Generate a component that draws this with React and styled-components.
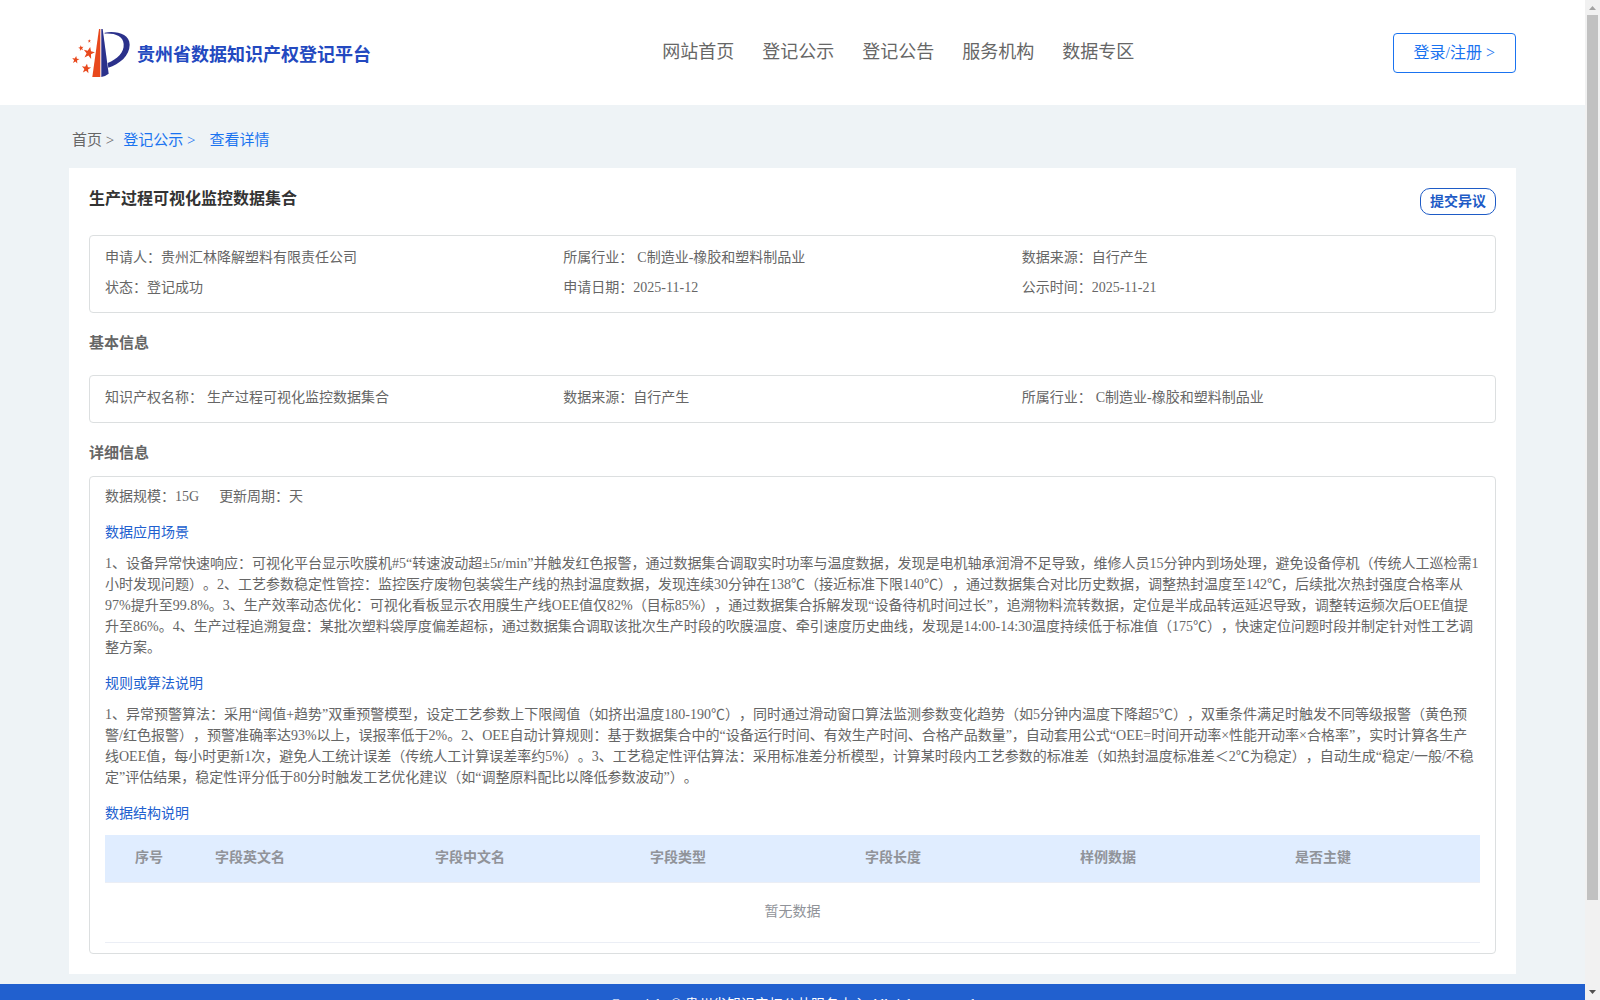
import React from 'react';
import styled, { createGlobalStyle } from 'styled-components';

const GlobalStyle = createGlobalStyle`
  * {
    box-sizing: border-box;
  }
  body {
    margin: 0;
    color: #666;
    font-family: 'Liberation Serif', 'Noto Sans CJK SC', serif;
    font-size: 14px;
    line-height: 21px;
    text-spacing-trim: space-all;
  }
  h1, h2, h3, p, dl, dd, ul {
    margin: 0;
    padding: 0;
  }
  a {
    color: inherit;
    text-decoration: none;
  }
`;

const Window = styled.div`
  display: flex;
  height: 100vh;
`;

const Page = styled.div`
  flex: 1;
  overflow-y: auto;
  scrollbar-width: none;
  background-color: #eef3f6;
`;

const ScrollTrack = styled.div`
  display: flex;
  flex-direction: column;
  align-items: center;
  width: 15px;
  background-color: #f1f1f1;
`;

const ScrollArrow = styled.svg`
  display: block;
  width: 15px;
  height: 15px;
`;

const ScrollSpace = styled.div`
  flex: 1;
  width: 11px;
`;

const ScrollThumb = styled.div`
  height: calc(100% - 85px);
  background-color: #c1c1c1;
`;

const Header = styled.header`
  display: flex;
  align-items: center;
  height: 105px;
  padding: 0 69px;
  background-color: #fff;
`;

const Brand = styled.a`
  display: flex;
  align-items: center;
  flex: 0 0 41%;
  gap: 6px;
  padding-left: 3px;
  color: #2349c0;
  font-size: 18px;
  font-weight: bold;
  white-space: nowrap;
`;

const BrandName = styled.span`
  padding-top: 5px;
`;

const LogoImage = styled.svg`
  width: 59px;
  height: 50px;
`;

const Nav = styled.nav`
  display: flex;
  flex: 1;
  gap: 28px;
  font-size: 18px;
  white-space: nowrap;
`;

const LoginButton = styled.button`
  height: 40px;
  padding: 0 20px 3px;
  border: 1px solid #1a73f0;
  border-radius: 4px;
  background-color: #fff;
  color: #1a73f0;
  font-family: inherit;
  font-size: 16px;
  white-space: nowrap;
`;

const Breadcrumb = styled.nav`
  display: flex;
  gap: 9px;
  padding: 25px 72px 17px;
  font-size: 15px;
`;

const Crumb = styled.a`
  color: ${({ $active }) => ($active ? '#1a73f0' : '#666')};
  margin-right: ${({ $active }) => ($active ? '5px' : 0)};
`;

const Card = styled.main`
  margin: 0 69px 10px;
  padding: 20px;
  background-color: #fff;
`;

const CardHeader = styled.div`
  display: flex;
  justify-content: space-between;
  align-items: flex-start;
  margin-bottom: 20px;
`;

const Title = styled.h1`
  color: #333;
  font-size: 16px;
  font-weight: bold;
`;

const ObjectionButton = styled.button`
  height: 27px;
  padding: 0 9px 4px;
  border: 1px solid #1e5bc6;
  border-radius: 10px;
  background-color: #fff;
  color: #1e5bc6;
  font-family: inherit;
  font-size: 14px;
  font-weight: bold;
`;

const SectionTitle = styled.h2`
  margin: ${({ $compact }) => ($compact ? '20px 0 12px' : '20px 0 21px')};
  font-size: 15px;
  font-weight: bold;
`;

const Box = styled.section`
  padding: 9px 15px 10px;
  border: 1px solid #dcdfe0;
  border-radius: 4px;
`;

const InfoList = styled.dl`
  display: grid;
  grid-template-columns: repeat(3, 1fr);
  padding: 7px 15px 9px;
  border: 1px solid #dcdfe0;
  border-radius: 4px;
`;

const InfoItem = styled.div`
  display: flex;
  gap: ${({ $spaced }) => ($spaced ? '4px' : 0)};
  line-height: 30px;
`;

const Meta = styled.p`
  display: flex;
  gap: 20px;
`;

const SubTitle = styled.h3`
  margin: 15px 0 10px;
  color: #2160cf;
  font-size: 14px;
  font-weight: normal;
`;

const Table = styled.table`
  width: 100%;
  margin-top: 11px;
  table-layout: fixed;
  border-collapse: separate;
  border-spacing: 0;
  color: #909399;
`;

const HeadCell = styled.th`
  width: ${({ $width }) => $width || 'auto'};
  height: 48px;
  padding: 0 0 2px 30px;
  border-bottom: 1px solid #ebeef5;
  background-color: #e0edff;
  text-align: left;
`;

const EmptyCell = styled.td`
  height: 60px;
  padding: 0 0 2px;
  border-bottom: 1px solid #ebeef5;
  text-align: center;
`;

const Footer = styled.footer`
  padding: 10px 0 20px;
  background-color: #2160cf;
  color: #fff;
  text-align: center;
`;

const MENUS = ['网站首页', '登记公示', '登记公告', '服务机构', '数据专区'];

const SUMMARY = [
  { label: '申请人：', value: '贵州汇林降解塑料有限责任公司' },
  { label: '所属行业：', value: 'C制造业-橡胶和塑料制品业', spaced: true },
  { label: '数据来源：', value: '自行产生' },
  { label: '状态：', value: '登记成功' },
  { label: '申请日期：', value: '2025-11-12' },
  { label: '公示时间：', value: '2025-11-21' },
];

const BASIC = [
  { label: '知识产权名称：', value: '生产过程可视化监控数据集合', spaced: true },
  { label: '数据来源：', value: '自行产生' },
  { label: '所属行业：', value: 'C制造业-橡胶和塑料制品业', spaced: true },
];

const COLUMNS = [
  { name: '序号', width: '80px' },
  { name: '字段英文名', width: '220px' },
  { name: '字段中文名' },
  { name: '字段类型' },
  { name: '字段长度' },
  { name: '样例数据' },
  { name: '是否主键' },
];

const SCENE =
  '1、设备异常快速响应：可视化平台显示吹膜机#5“转速波动超±5r/min”并触发红色报警，通过数据集合调取实时功率与温度数据，发现是电机轴承润滑不足导致，维修人员15分钟内到场处理，避免设备停机（传统人工巡检需1小时发现问题）。2、工艺参数稳定性管控：监控医疗废物包装袋生产线的热封温度数据，发现连续30分钟在138℃（接近标准下限140℃），通过数据集合对比历史数据，调整热封温度至142℃，后续批次热封强度合格率从97%提升至99.8%。3、生产效率动态优化：可视化看板显示农用膜生产线OEE值仅82%（目标85%），通过数据集合拆解发现“设备待机时间过长”，追溯物料流转数据，定位是半成品转运延迟导致，调整转运频次后OEE值提升至86%。4、生产过程追溯复盘：某批次塑料袋厚度偏差超标，通过数据集合调取该批次生产时段的吹膜温度、牵引速度历史曲线，发现是14:00-14:30温度持续低于标准值（175℃），快速定位问题时段并制定针对性工艺调整方案。';

const RULES =
  '1、异常预警算法：采用“阈值+趋势”双重预警模型，设定工艺参数上下限阈值（如挤出温度180-190℃），同时通过滑动窗口算法监测参数变化趋势（如5分钟内温度下降超5℃），双重条件满足时触发不同等级报警（黄色预警/红色报警），预警准确率达93%以上，误报率低于2%。2、OEE自动计算规则：基于数据集合中的“设备运行时间、有效生产时间、合格产品数量”，自动套用公式“OEE=时间开动率×性能开动率×合格率”，实时计算各生产线OEE值，每小时更新1次，避免人工统计误差（传统人工计算误差率约5%）。3、工艺稳定性评估算法：采用标准差分析模型，计算某时段内工艺参数的标准差（如热封温度标准差＜2℃为稳定），自动生成“稳定/一般/不稳定”评估结果，稳定性评分低于80分时触发工艺优化建议（如“调整原料配比以降低参数波动”）。';

const STAR = '0,-10 3,-3 10,-3 4,2 6,10 0,5 -6,10 -4,2 -10,-3 -3,-3';

const Logo = () => (
  <LogoImage viewBox="36 24 177 150" aria-hidden="true">
    <path d="M117 27h4v144H97z" fill="#e8481c" />
    <path d="M124 27h4l18 134q-10 8-22 10z" fill="#2b318b" />
    <path
      d="M134 38C170 32 209 42 209 74C209 108 178 132 145 143L143 129C172 117 193 98 191 72C190 48 164 39 134 41Z"
      fill="#2b318b"
    />
    <g fill="#e8481c">
      <polygon points={STAR} transform="translate(87 98) rotate(12) scale(1.7)" />
      <polygon points={STAR} transform="translate(79 145) rotate(8) scale(1.4)" />
      <polygon points={STAR} transform="translate(47 119) rotate(8) scale(1.1)" />
      <polygon points={STAR} transform="translate(63 84) rotate(-10) scale(0.8)" />
      <polygon points={STAR} transform="translate(88 63) scale(0.5)" />
    </g>
  </LogoImage>
);

const Info = ({ items }) => (
  <InfoList>
    {items.map(({ label, value, spaced }) => (
      <InfoItem key={label} $spaced={spaced}>
        <dt>{label}</dt>
        <dd>{value}</dd>
      </InfoItem>
    ))}
  </InfoList>
);

const App = () => {
  return (
    <>
      <GlobalStyle />
      <Window>
        <Page>
          <Header>
            <Brand href="#home">
              <Logo />
              <BrandName>贵州省数据知识产权登记平台</BrandName>
            </Brand>
            <Nav>
              {MENUS.map(menu => (
                <a key={menu} href="#menu">
                  {menu}
                </a>
              ))}
            </Nav>
            <LoginButton type="button">登录/注册 &gt;</LoginButton>
          </Header>
          <Breadcrumb>
            <Crumb href="#home">首页 &gt;</Crumb>
            <Crumb href="#list" $active>
              登记公示 &gt;
            </Crumb>
            <Crumb href="#detail" $active>
              查看详情
            </Crumb>
          </Breadcrumb>
          <Card>
            <CardHeader>
              <Title>生产过程可视化监控数据集合</Title>
              <ObjectionButton type="button">提交异议</ObjectionButton>
            </CardHeader>
            <Info items={SUMMARY} />
            <SectionTitle>基本信息</SectionTitle>
            <Info items={BASIC} />
            <SectionTitle $compact>详细信息</SectionTitle>
            <Box>
              <Meta>
                <span>数据规模：15G</span>
                <span>更新周期：天</span>
              </Meta>
              <SubTitle>数据应用场景</SubTitle>
              <p>{SCENE}</p>
              <SubTitle>规则或算法说明</SubTitle>
              <p>{RULES}</p>
              <SubTitle>数据结构说明</SubTitle>
              <Table>
                <thead>
                  <tr>
                    {COLUMNS.map(({ name, width }) => (
                      <HeadCell key={name} $width={width}>
                        {name}
                      </HeadCell>
                    ))}
                  </tr>
                </thead>
                <tbody>
                  <tr>
                    <EmptyCell colSpan={COLUMNS.length}>暂无数据</EmptyCell>
                  </tr>
                </tbody>
              </Table>
            </Box>
          </Card>
          <Footer>Copyright © 贵州省知识产权公共服务中心 All rights reserved</Footer>
        </Page>
        <ScrollTrack aria-hidden="true">
          <ScrollArrow viewBox="0 0 15 15">
            <path d="M4 10h7L7.500 6z" fill="#a3a3a3" />
          </ScrollArrow>
          <ScrollSpace>
            <ScrollThumb />
          </ScrollSpace>
          <ScrollArrow viewBox="0 0 15 15">
            <path d="M4 5h7L7.500 9z" fill="#505050" />
          </ScrollArrow>
        </ScrollTrack>
      </Window>
    </>
  );
};

export default App;
